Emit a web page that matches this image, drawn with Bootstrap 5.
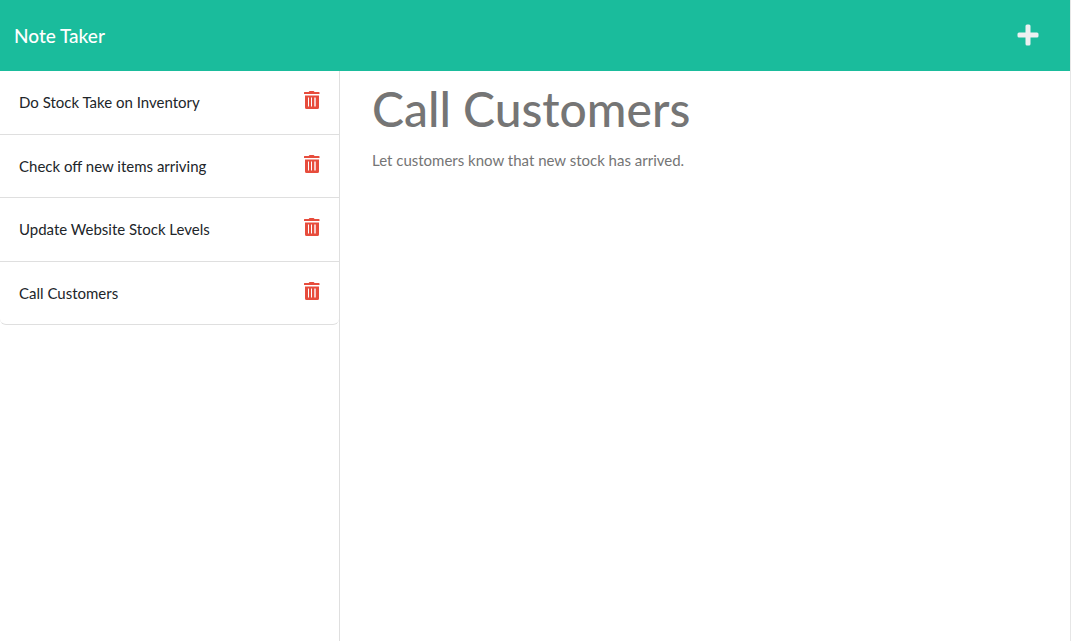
<!DOCTYPE html>
<html lang="en">
<head>
<meta charset="utf-8">
<meta name="viewport" content="width=device-width, initial-scale=1">
<title>Note Taker</title>
<link href="https://cdn.jsdelivr.net/npm/bootstrap@5.3.0/dist/css/bootstrap.min.css" rel="stylesheet">
<style>
  body { font-family: Lato, "Liberation Sans", sans-serif; font-size: 15px; color: #212529; background: #fff; }
  .app-shell { border-right: 1px solid #e6e6e6; margin-right: 1px; }
  .app-bar { background: #1abc9c; height: 71px; padding: 0 29px 2px 14px; }
  .app-bar .navbar-brand { font-size: 19px; line-height: 30px; font-weight: 500; color: #fff; padding: 2px 0 0; }
  .icon-btn { background: none; border: 0; padding: 0; line-height: 1; display: block; }
  .icon-btn svg { display: block; }
  .note-sidebar { flex: 0 0 340px; border-right: 1px solid #dfdfdf; }
  .note-list .list-group-item { padding: 20px 19px; border-color: #dfdfdf; border-width: 0 0 1px; color: #212529; }
  .note-link { color: inherit; text-decoration: none; }
  .note-editor { padding: 10px 20px 0 20px; }
  .note-editor .form-control { border: 0; color: #757575; background: transparent; padding: 0 12px; }
  .note-editor .note-title { font-size: 48px; line-height: 56px; font-weight: 500; }
  .note-editor .note-text { font-size: 15px; resize: none; margin-top: 12px; }
</style>
</head>
<body>
<div class="app-shell d-flex flex-column min-vh-100">
  <nav class="navbar app-bar d-flex justify-content-between align-items-center">
    <a class="navbar-brand m-0" href="#">Note Taker</a>
    <button class="icon-btn" type="button" aria-label="New note">
      <svg width="26" height="22" viewBox="0 0 26 22" fill="#ecf0f1" aria-hidden="true"><path d="M12 .5h2q1.500 0 1.500 1.500v6.500h6.500q1.500 0 1.500 1.500v2q0 1.500-1.500 1.500h-6.500v6.500q0 1.500-1.500 1.500h-2q-1.500 0-1.500-1.500v-6.500H4q-1.500 0-1.500-1.500v-2q0-1.500 1.500-1.500h6.500V2q0-1.500 1.500-1.500z"/></svg>
    </button>
  </nav>
  <div class="d-flex flex-grow-1">
    <aside class="note-sidebar">
      <ul class="list-group note-list rounded-top-0">
        <li class="list-group-item d-flex justify-content-between align-items-start rounded-top-0">
          <a class="note-link" href="#">Do Stock Take on Inventory</a>
          <button class="icon-btn" type="button" aria-label="Delete Do Stock Take on Inventory"><svg width="16" height="18" aria-hidden="true"><use href="#trash"/></svg></button>
        </li>
        <li class="list-group-item d-flex justify-content-between align-items-start">
          <a class="note-link" href="#">Check off new items arriving</a>
          <button class="icon-btn" type="button" aria-label="Delete Check off new items arriving"><svg width="16" height="18" aria-hidden="true"><use href="#trash"/></svg></button>
        </li>
        <li class="list-group-item d-flex justify-content-between align-items-start">
          <a class="note-link" href="#">Update Website Stock Levels</a>
          <button class="icon-btn" type="button" aria-label="Delete Update Website Stock Levels"><svg width="16" height="18" aria-hidden="true"><use href="#trash"/></svg></button>
        </li>
        <li class="list-group-item d-flex justify-content-between align-items-start">
          <a class="note-link" href="#">Call Customers</a>
          <button class="icon-btn" type="button" aria-label="Delete Call Customers"><svg width="16" height="18" aria-hidden="true"><use href="#trash"/></svg></button>
        </li>
      </ul>
    </aside>
    <main class="note-editor flex-grow-1 d-flex flex-column">
      <input class="form-control note-title" type="text" value="Call Customers" aria-label="Note title" readonly>
      <textarea class="form-control note-text flex-grow-1" aria-label="Note text" readonly>Let customers know that new stock has arrived.</textarea>
    </main>
  </div>
</div>
<svg class="d-none" aria-hidden="true">
  <symbol id="trash" viewBox="0 0 16 18">
    <path fill="#e74c3c" fill-rule="evenodd" d="M.5 1h4.200l.5-.7q.2-.3.6-.3h3.600q.4 0 .6.3l.5.7h4.500q.5 0 .5.500V3H0V1.500Q0 1 .5 1zM1 4.500h14v12q0 1.500-1.500 1.500h-11Q1 18 1 16.500zM4 6.500v9h1v-9zM7 6.500v9h1v-9zM10.300 6.500v9h1.400v-9z"/>
  </symbol>
</svg>
<script src="https://cdn.jsdelivr.net/npm/bootstrap@5.3.0/dist/js/bootstrap.bundle.min.js"></script>
</body>
</html>
